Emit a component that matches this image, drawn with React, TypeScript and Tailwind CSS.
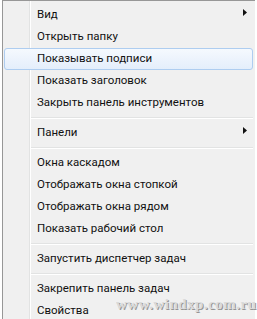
type Entry = { label: string; sub?: boolean; active?: boolean } | 'sep'

const entries: Entry[] = [
  { label: 'Вид', sub: true },
  { label: 'Открыть папку' },
  { label: 'Показывать подписи', active: true },
  { label: 'Показать заголовок' },
  { label: 'Закрыть панель инструментов' },
  'sep',
  { label: 'Панели', sub: true },
  'sep',
  { label: 'Окна каскадом' },
  { label: 'Отображать окна стопкой' },
  { label: 'Отображать окна рядом' },
  { label: 'Показать рабочий стол' },
  'sep',
  { label: 'Запустить диспетчер задач' },
  'sep',
  { label: 'Закрепить панель задач' },
  { label: 'Свойства' },
]

export default function App() {
  return (
    <div className="w-[257px] h-[319px] overflow-hidden bg-white pl-[2px] relative">
      {/* Menu */}
      <div
        className="w-[253px] h-[330px] border-l border-t border-[#979797] bg-[#f0f0f0] bg-[linear-gradient(to_right,#f0f0f0_26px,#e2e3e3_26px,#e2e3e3_27px,#ffffff_27px,#ffffff_28px,#f0f0f0_28px)] pt-[3px] pr-[1px] text-[11.5px] text-[#111] font-['Roboto',sans-serif]"
      >
        {entries.map((e, i) =>
          e === 'sep' ? (
            <div key={i} className="h-[8px] flex flex-col justify-center pl-[28px] pr-[1px]">
              <div className="h-[1px] bg-[#e2e3e3]" />
              <div className="h-[1px] bg-white" />
            </div>
          ) : (
            <div
              key={i}
              className={
                e.active
                  ? 'h-[22px] mx-[1px] flex items-center pl-[32px] pr-[5px] rounded-[3px] border border-[#aecdf0] bg-[linear-gradient(to_bottom,#f5f9fe,#e4eefb)]'
                  : 'h-[22px] mx-[1px] flex items-center pl-[32px] pr-[5px] border border-transparent'
              }
            >
              <span className="flex-1 leading-none">{e.label}</span>
              {e.sub && (
                <svg width="4" height="7" viewBox="0 0 4 7" className="mb-[5px]">
                  <path d="M0 0L4 3.5L0 7Z" fill="#111" />
                </svg>
              )}
            </div>
          )
        )}
      </div>

      {/* Watermark */}
      <div className="absolute left-[116px] top-[293px] text-[15px] font-bold tracking-[0.5px] text-[#d8d8d8] font-['Liberation_Serif',serif] [text-shadow:1px_1px_0_#8c8c8c] opacity-90 whitespace-nowrap">
        www.windxp.com.ru
      </div>
    </div>
  )
}
